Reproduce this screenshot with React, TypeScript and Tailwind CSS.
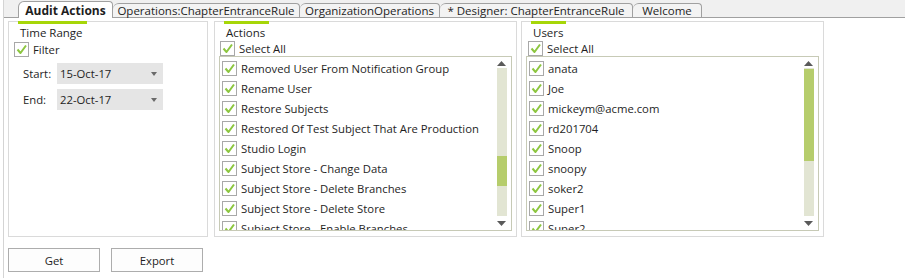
const FONT = { fontFamily: '"Segoe UI", "Open Sans", "Noto Sans", sans-serif' };

const ACTIONS = [
  "Removed User From Notification Group",
  "Rename User",
  "Restore Subjects",
  "Restored Of Test Subject That Are Production",
  "Studio Login",
  "Subject Store - Change Data",
  "Subject Store - Delete Branches",
  "Subject Store - Delete Store",
  "Subject Store - Enable Branches",
];

const USERS = [
  "anata",
  "Joe",
  "mickeym@acme.com",
  "rd201704",
  "Snoop",
  "snoopy",
  "soker2",
  "Super1",
  "Super2",
];

const TABS = [
  { label: "Operations:ChapterEntranceRule", w: "w-[187px]" },
  { label: "OrganizationOperations", w: "w-[140px]" },
  { label: "* Designer: ChapterEntranceRule", w: "w-[193px]" },
  { label: "Welcome", w: "w-[69px]" },
];

function Check() {
  return (
    <span className="flex h-[15px] w-[15px] shrink-0 items-center justify-center border border-[#a8a8a8] bg-white">
      <svg width="13" height="13" viewBox="0 0 13 13">
        <path
          d="M2.5 6.5 L5.5 10 L11 2.5"
          fill="none"
          stroke="#8cc63f"
          strokeWidth="2"
          strokeLinejoin="round"
        />
      </svg>
    </span>
  );
}

function GroupHeader({ title, bar }: { title: string; bar: string }) {
  return (
    <>
      <div className={`ml-[9px] -mt-px h-[3px] bg-[#a6d608] ${bar}`} />
      <div className="ml-[11px] mt-[1px] h-[15px] text-[11.5px] leading-[15px]">{title}</div>
    </>
  );
}

function Arrow({ up }: { up?: boolean }) {
  return (
    <svg width="9" height="5" viewBox="0 0 9 5">
      <path d={up ? "M0 5 L4.5 0 L9 5 Z" : "M0 0 L4.5 5 L9 0 Z"} fill="#5a5a5a" />
    </svg>
  );
}

function CheckList({
  items,
  thumbTop,
  thumbH,
}: {
  items: string[];
  thumbTop: string;
  thumbH: string;
}) {
  return (
    <div className="mx-[4px] flex h-[175px] overflow-hidden border border-[#c7cab6]">
      <div className="flex flex-1 flex-col pl-[2px] pt-[1px]">
        {items.map((it) => (
          <div key={it} className="flex h-[20px] shrink-0 items-center gap-[4px]">
            <Check />
            <span className="whitespace-nowrap">{it}</span>
          </div>
        ))}
      </div>
      <div className="flex w-[16px] flex-col items-center pr-[3px]">
        <div className="flex h-[9px] items-end">
          <Arrow up />
        </div>
        <div className="mt-[2px] w-[10px] flex-1 bg-[#e2e5d3]">
          <div className={`w-full bg-[#b6cd6c] ${thumbTop} ${thumbH}`} />
        </div>
        <div className="flex h-[14px] items-center">
          <Arrow />
        </div>
      </div>
    </div>
  );
}

function Dropdown({ label, value }: { label: string; value: string }) {
  return (
    <div className="flex items-center">
      <span className="w-[35px] pl-[1px]">{label}</span>
      <div className="flex h-[21px] w-[106px] items-center justify-between bg-[#e5e5e5] pl-[3px] pr-[6px]">
        <span>{value}</span>
        <svg width="6" height="4" viewBox="0 0 6 4">
          <path d="M0 0 L3 4 L6 0 Z" fill="#6a6a6a" />
        </svg>
      </div>
    </div>
  );
}

export default function App() {
  return (
    <div
      className="h-[278px] w-[905px] overflow-hidden bg-white text-[11.3px] leading-[15px] text-[#1e1e1e]"
      style={FONT}
    >
      <div className="ml-[3px] h-full border-l border-[#d4d4d4]">
        {/* tab strip */}
        <div className="flex h-[18px] items-end border-b border-[#a0a0a0] bg-[#f0f0f0] pl-[14px]">
          <div className="-mb-px flex h-[17px] w-[95px] items-center justify-center rounded-tl-[6px] rounded-tr-[4px] border border-b-0 border-[#a0a0a0] bg-white text-[12px] font-bold">
            Audit Actions
          </div>
          {TABS.map((t) => (
            <div
              key={t.label}
              className={`flex h-[14px] items-center justify-center rounded-tl-[6px] rounded-tr-[4px] border border-b-0 border-l-0 border-[#a0a0a0] bg-[#f3f3f3] text-[11.5px] ${t.w}`}
            >
              {t.label}
            </div>
          ))}
        </div>

        {/* panels */}
        <div className="flex pl-[4px] pt-[3px]">
          <div className="flex h-[216px] w-[200px] flex-col border border-[#dadada]">
            <GroupHeader title="Time Range" bar="w-[69px]" />
            <div className="ml-[5px] mt-[2px] flex items-center gap-[4px]">
              <Check />
              <span>Filter</span>
            </div>
            <div className="ml-[13px] mt-[6px] flex flex-col gap-[5px]">
              <Dropdown label="Start:" value="15-Oct-17" />
              <Dropdown label="End:" value="22-Oct-17" />
            </div>
          </div>

          <div className="ml-[6px] flex h-[216px] w-[303px] flex-col border border-[#dadada]">
            <GroupHeader title="Actions" bar="w-[45px]" />
            <div className="ml-[5px] mt-[1px] flex items-center gap-[4px]">
              <Check />
              <span>Select All</span>
            </div>
            <CheckList items={ACTIONS} thumbTop="mt-[88px]" thumbH="h-[30px]" />
          </div>

          <div className="ml-[4px] flex h-[216px] w-[303px] flex-col border border-[#dadada]">
            <GroupHeader title="Users" bar="w-[35px]" />
            <div className="ml-[6px] mt-[1px] flex items-center gap-[4px]">
              <Check />
              <span>Select All</span>
            </div>
            <CheckList items={USERS} thumbTop="mt-[1px]" thumbH="h-[92px]" />
          </div>
        </div>

        {/* buttons */}
        <div className="ml-[4px] mt-[11px] flex gap-[11px]">
          <button className="h-[24px] w-[92px] border border-[#adadad] bg-[#fdfdfd]">
            Get
          </button>
          <button className="h-[24px] w-[92px] border border-[#adadad] bg-[#fdfdfd]">
            Export
          </button>
        </div>
      </div>
    </div>
  );
}
